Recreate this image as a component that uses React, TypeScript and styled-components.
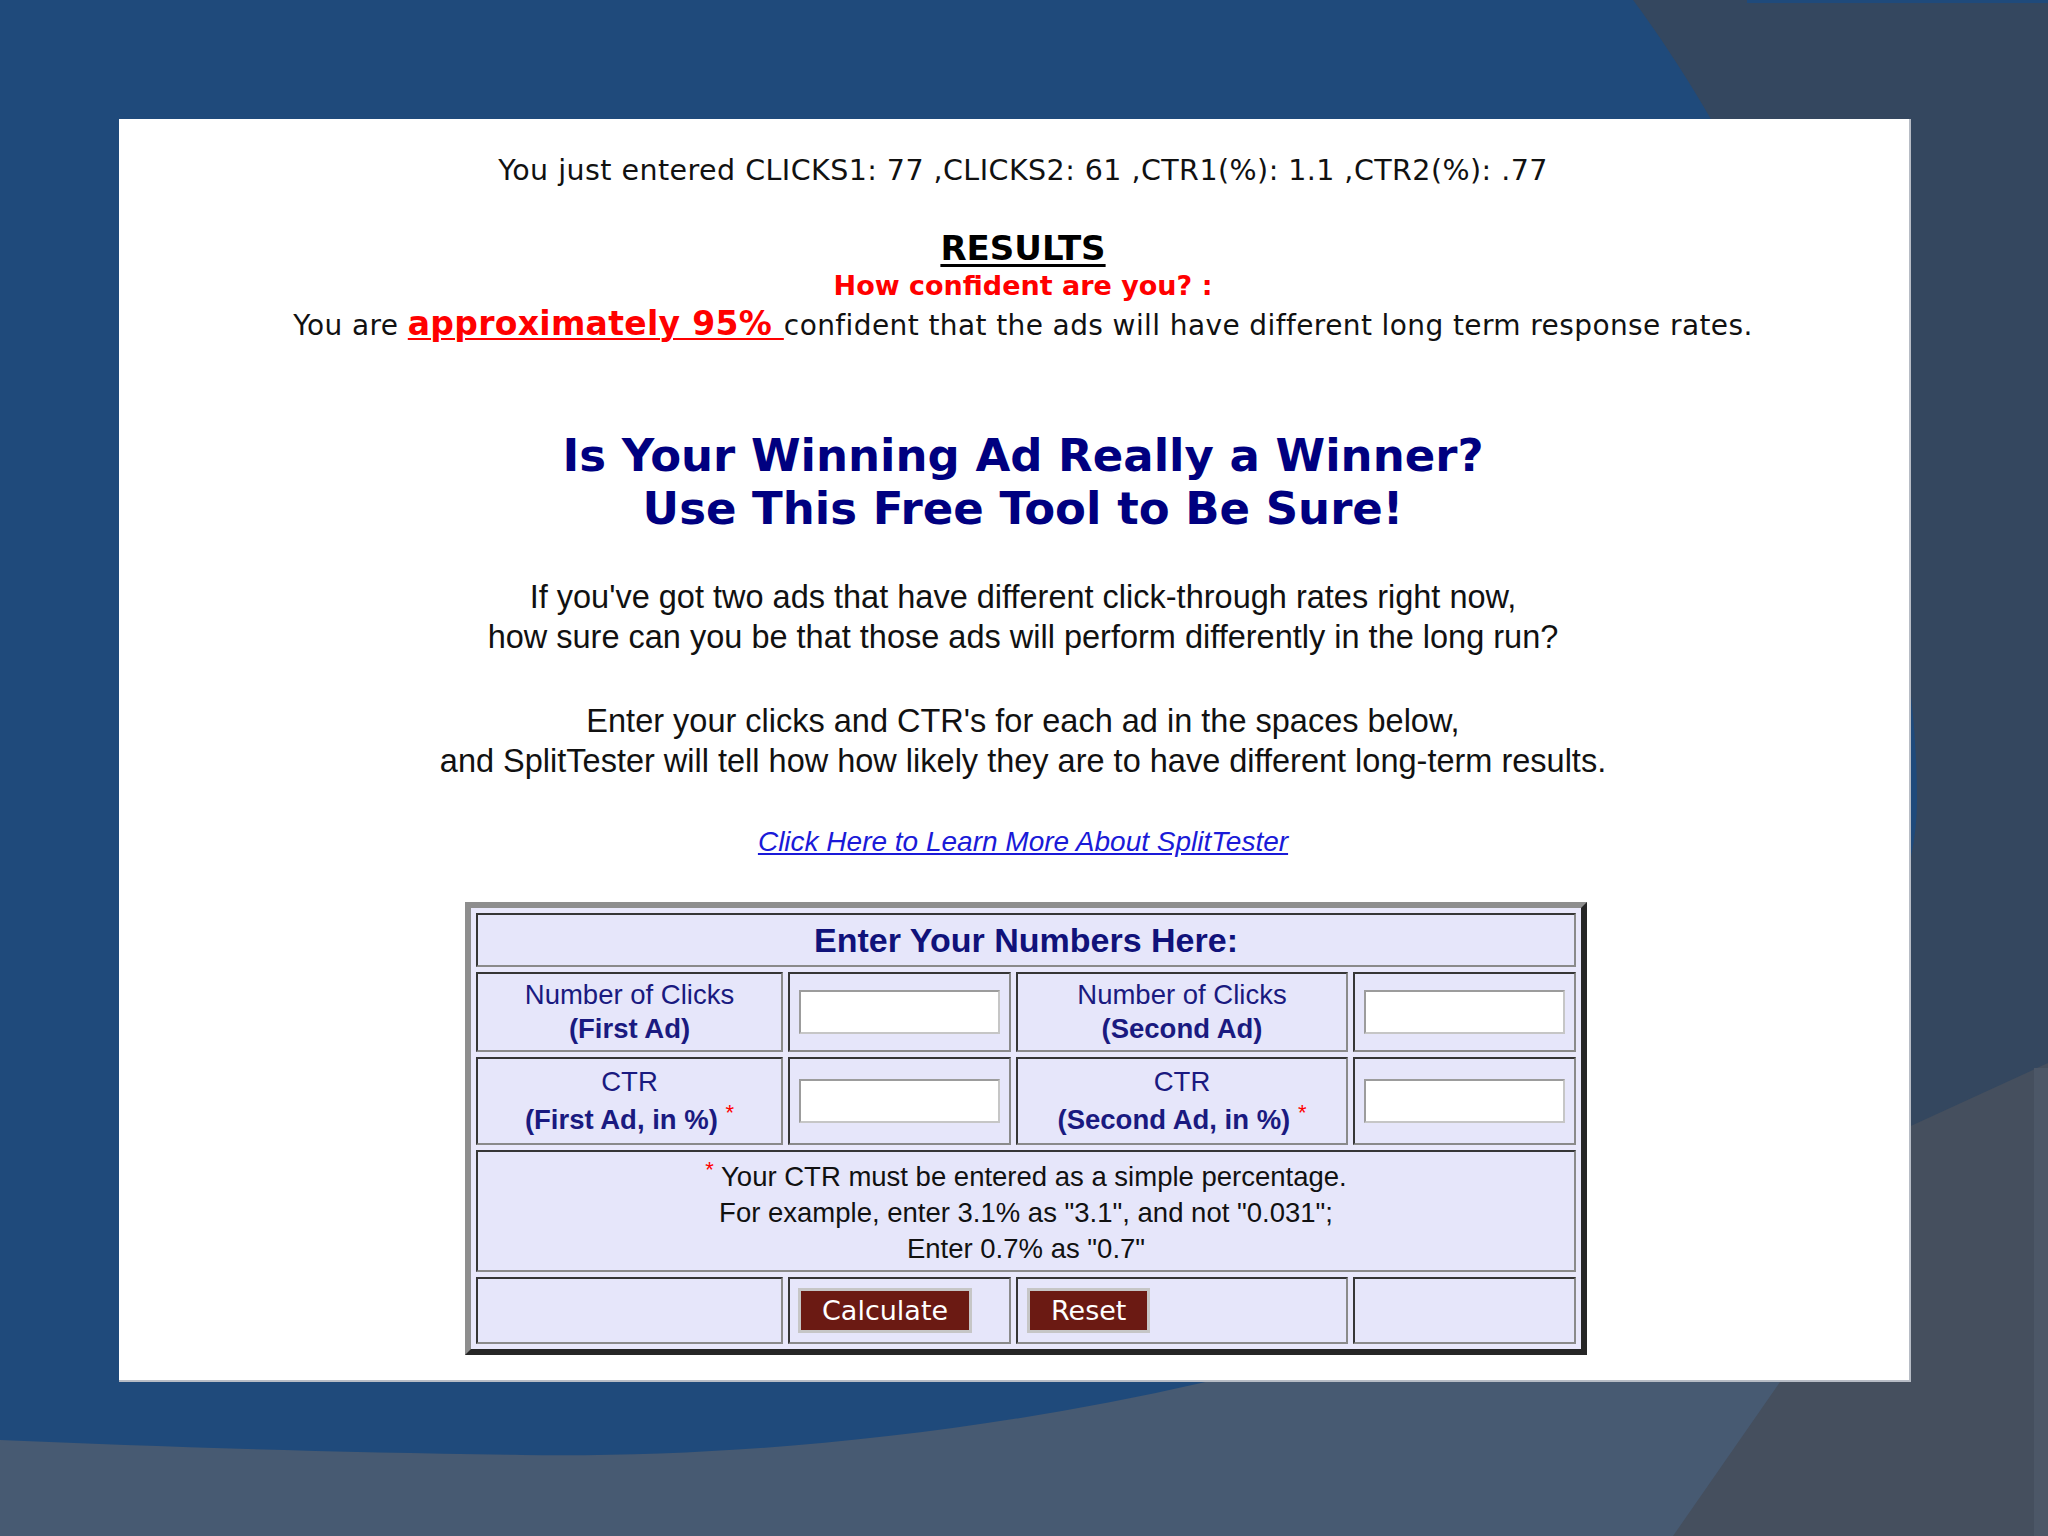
import React from "react";
import styled, { createGlobalStyle } from "styled-components";

const verdana = `"DejaVu Sans", Verdana, sans-serif`;
const arial = `"Liberation Sans", Arial, sans-serif`;

const GlobalStyle = createGlobalStyle`
  * {
    box-sizing: border-box;
  }
  html,
  body {
    margin: 0;
    padding: 0;
  }
  body {
    width: 2048px;
    height: 1536px;
    overflow: hidden;
    background: #1f4a7b;
  }
`;

const Page = styled.div`
  position: relative;
  width: 2048px;
  height: 1536px;
  overflow: hidden;
  padding: 119px 0 0 119px;
`;

const Backdrop = styled.svg`
  position: absolute;
  left: 0;
  top: 0;
  width: 2048px;
  height: 1536px;
`;

const Panel = styled.main`
  position: relative;
  width: 1792px;
  height: 1263px;
  background: #fff;
  padding: 35px 0 0 18px;
  text-align: center;
  border-right: 2px solid #b7bcc5;
  border-bottom: 2px solid #b7bcc5;
`;

const TopLine = styled.p`
  margin: 0;
  font-family: ${verdana};
  font-size: 28.5px;
  line-height: 34px;
  letter-spacing: 0.45px;
  color: #111;
`;

const ResultsTitle = styled.h2`
  margin: 40px 0 0;
  font-family: ${verdana};
  font-size: 34px;
  font-weight: bold;
  line-height: 40px;
  color: #000;
  text-decoration: underline;
  text-decoration-thickness: 3px;
  text-underline-offset: 4px;
`;

const Question = styled.p`
  margin: 0;
  font-family: ${verdana};
  font-size: 27px;
  font-weight: bold;
  line-height: 36px;
  color: #f00;
`;

const Verdict = styled.p`
  margin: 0;
  font-family: ${verdana};
  font-size: 28px;
  line-height: 40px;
  letter-spacing: 0.4px;
  color: #111;
`;

const Highlight = styled.span`
  font-size: 33px;
  font-weight: bold;
  letter-spacing: 0.3px;
  color: #f00;
  text-decoration: underline;
  text-decoration-thickness: 2px;
  text-underline-offset: 3px;
`;

const Headline = styled.h1`
  margin: 83px 0 0;
  font-family: ${verdana};
  font-size: 45px;
  font-weight: bold;
  line-height: 53px;
  color: #000080;
`;

const Lead = styled.p<{ $gap: number }>`
  margin: ${(p) => p.$gap}px 0 0;
  font-family: ${arial};
  font-size: 32.5px;
  line-height: 40px;
  color: #111;
`;

const LinkLine = styled.p`
  margin: 43px 0 0;
  font-family: ${arial};
  font-size: 28px;
  line-height: 36px;
`;

const MoreLink = styled.a`
  font-style: italic;
  color: #1a1ad8;
  text-decoration: underline;
`;

const FormTable = styled.table`
  margin: 42px 0 0 calc(50% - 558px);
  width: 1122px;
  table-layout: fixed;
  border-collapse: separate;
  border-spacing: 5px;
  border: 6px solid;
  border-color: #8e8e8e #262626 #262626 #8e8e8e;
  background: #e9e8fb;
`;

const Col = styled.col<{ $w: number }>`
  width: ${(p) => p.$w}px;
`;

const Cell = styled.td<{ $h: number; $left?: number }>`
  height: ${(p) => p.$h}px;
  padding: 0 0 0 ${(p) => p.$left ?? 0}px;
  background: #e6e6fa;
  border: 2px solid;
  border-color: #363636 #8a8a8a #8a8a8a #363636;
  text-align: ${(p) => (p.$left !== undefined ? "left" : "center")};
  vertical-align: middle;
`;

const TableTitle = styled.div`
  font-family: ${arial};
  font-size: 34px;
  font-weight: bold;
  line-height: 40px;
  color: #10127a;
`;

const Label = styled.div<{ $lh: number }>`
  font-family: ${arial};
  font-size: 27.5px;
  line-height: ${(p) => p.$lh}px;
  color: #1a1a80;
`;

const LabelStrong = styled.span`
  display: block;
  font-weight: bold;
`;

const Star = styled.sup`
  font-size: 22px;
  line-height: 0;
  vertical-align: 9px;
  color: #f00;
  font-weight: normal;
`;

const NumberInput = styled.input`
  display: block;
  margin: 0 auto;
  width: 201px;
  height: 44px;
  border: 2px solid;
  border-color: #9c9c9c #c6c6c6 #c6c6c6 #9c9c9c;
  background: #fff;
  outline: none;
`;

const Note = styled.div`
  padding-top: 4px;
  font-family: ${arial};
  font-size: 27.5px;
  line-height: 36px;
  color: #111;
`;

const ActionButton = styled.button`
  height: 45px;
  padding: 0 21px;
  border: 3px solid #c6c6c6;
  border-radius: 0;
  background: #6b1a13;
  color: #fff;
  font-family: ${verdana};
  font-size: 27px;
  line-height: 39px;
  vertical-align: middle;
  cursor: pointer;
`;

const Background = () => (
  <Backdrop viewBox="0 0 2048 1536" aria-hidden="true">
    <rect width="2048" height="1536" fill="#34475f" />
    <rect x="0" y="1240" width="1800" height="296" fill="#475a72" />
    <path
      d="M1780 1382 L1830 1163 L2048 1063 L2048 1536 L1673 1536 Z"
      fill="#454f5e"
    />
    <rect x="2034" y="1068" width="14" height="468" fill="#4c5767" />
    <path
      d="M0 0 L1633 0 C1760 170 1917 500 1917 800 C1917 1080 1480 1320 1201 1383 C960 1438 720 1458 522 1455 C330 1452 160 1447 0 1440 Z"
      fill="#1f4a7b"
    />
    <rect x="1747" y="0" width="301" height="3" fill="#1f4a7b" />
  </Backdrop>
);

const App = () => {
  return (
    <>
      <GlobalStyle />
      <Page>
        <Background />
        <Panel>
          <TopLine>
            You just entered CLICKS1: 77 ,CLICKS2: 61 ,CTR1(%): 1.1 ,CTR2(%): .77
          </TopLine>
          <ResultsTitle>RESULTS</ResultsTitle>
          <Question>How confident are you? :</Question>
          <Verdict>
            You are <Highlight>approximately 95% </Highlight>confident that the
            ads will have different long term response rates.
          </Verdict>

          <Headline>
            Is Your Winning Ad Really a Winner?
            <br />
            Use This Free Tool to Be Sure!
          </Headline>

          <Lead $gap={42}>
            If you've got two ads that have different click-through rates right
            now,
            <br />
            how sure can you be that those ads will perform differently in the
            long run?
          </Lead>
          <Lead $gap={44}>
            Enter your clicks and CTR's for each ad in the spaces below,
            <br />
            and SplitTester will tell how how likely they are to have different
            long-term results.
          </Lead>

          <LinkLine>
            <MoreLink href="#">Click Here to Learn More About SplitTester</MoreLink>
          </LinkLine>

          <FormTable>
            <colgroup>
              <Col $w={307} />
              <Col $w={223} />
              <Col $w={332} />
              <Col $w={223} />
            </colgroup>
            <tbody>
              <tr>
                <Cell $h={54} colSpan={4}>
                  <TableTitle>Enter Your Numbers Here:</TableTitle>
                </Cell>
              </tr>
              <tr>
                <Cell $h={80}>
                  <Label $lh={34}>
                    Number of Clicks
                    <LabelStrong>(First Ad)</LabelStrong>
                  </Label>
                </Cell>
                <Cell $h={80}>
                  <NumberInput type="text" name="clicks1" />
                </Cell>
                <Cell $h={80}>
                  <Label $lh={34}>
                    Number of Clicks
                    <LabelStrong>(Second Ad)</LabelStrong>
                  </Label>
                </Cell>
                <Cell $h={80}>
                  <NumberInput type="text" name="clicks2" />
                </Cell>
              </tr>
              <tr>
                <Cell $h={88}>
                  <Label $lh={38}>
                    CTR
                    <LabelStrong>
                      (First Ad, in %) <Star>*</Star>
                    </LabelStrong>
                  </Label>
                </Cell>
                <Cell $h={88}>
                  <NumberInput type="text" name="ctr1" />
                </Cell>
                <Cell $h={88}>
                  <Label $lh={38}>
                    CTR
                    <LabelStrong>
                      (Second Ad, in %) <Star>*</Star>
                    </LabelStrong>
                  </Label>
                </Cell>
                <Cell $h={88}>
                  <NumberInput type="text" name="ctr2" />
                </Cell>
              </tr>
              <tr>
                <Cell $h={122} colSpan={4}>
                  <Note>
                    <Star>*</Star> Your CTR must be entered as a simple
                    percentage.
                    <br />
                    For example, enter 3.1% as "3.1", and not "0.031";
                    <br />
                    Enter 0.7% as "0.7"
                  </Note>
                </Cell>
              </tr>
              <tr>
                <Cell $h={67} />
                <Cell $h={67} $left={8}>
                  <ActionButton type="button">Calculate</ActionButton>
                </Cell>
                <Cell $h={67} $left={9}>
                  <ActionButton type="button">Reset</ActionButton>
                </Cell>
                <Cell $h={67} />
              </tr>
            </tbody>
          </FormTable>
        </Panel>
      </Page>
    </>
  );
};

export default App;
